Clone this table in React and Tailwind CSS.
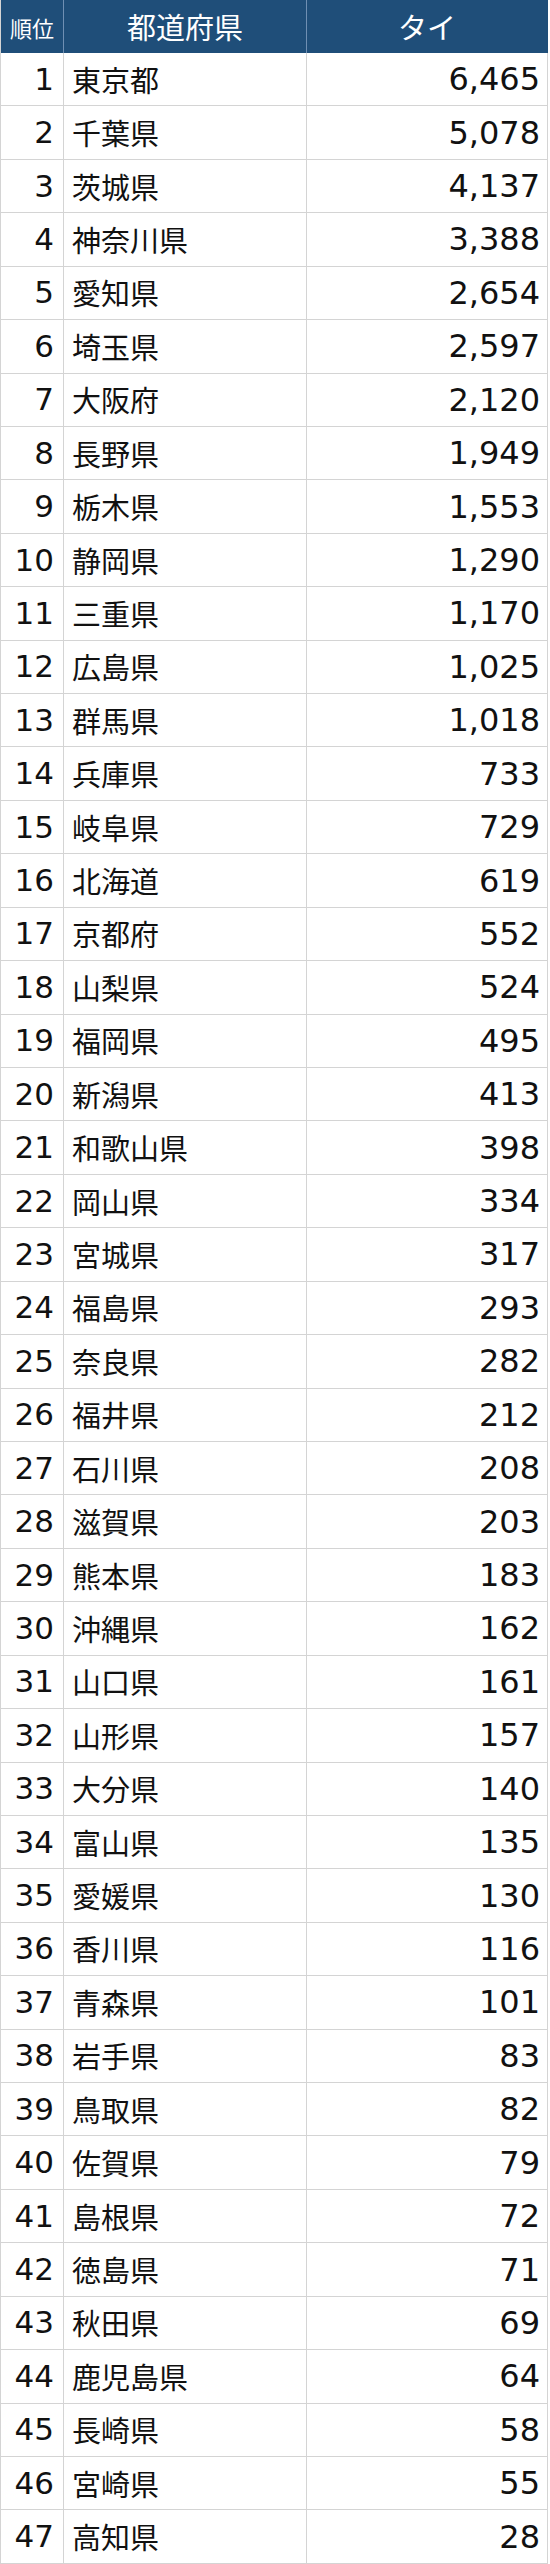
const rows = [
  ['東京都', '6,465'], ['千葉県', '5,078'], ['茨城県', '4,137'], ['神奈川県', '3,388'],
  ['愛知県', '2,654'], ['埼玉県', '2,597'], ['大阪府', '2,120'], ['長野県', '1,949'],
  ['栃木県', '1,553'], ['静岡県', '1,290'], ['三重県', '1,170'], ['広島県', '1,025'],
  ['群馬県', '1,018'], ['兵庫県', '733'], ['岐阜県', '729'], ['北海道', '619'],
  ['京都府', '552'], ['山梨県', '524'], ['福岡県', '495'], ['新潟県', '413'],
  ['和歌山県', '398'], ['岡山県', '334'], ['宮城県', '317'], ['福島県', '293'],
  ['奈良県', '282'], ['福井県', '212'], ['石川県', '208'], ['滋賀県', '203'],
  ['熊本県', '183'], ['沖縄県', '162'], ['山口県', '161'], ['山形県', '157'],
  ['大分県', '140'], ['富山県', '135'], ['愛媛県', '130'], ['香川県', '116'],
  ['青森県', '101'], ['岩手県', '83'], ['鳥取県', '82'], ['佐賀県', '79'],
  ['島根県', '72'], ['徳島県', '71'], ['秋田県', '69'], ['鹿児島県', '64'],
  ['長崎県', '58'], ['宮崎県', '55'], ['高知県', '28'],
];

const cjk = { fontFamily: "'Noto Sans CJK JP', 'Noto Sans', sans-serif" };
const num = { fontFamily: "'DejaVu Sans', 'Noto Sans CJK JP', sans-serif" };

export default function App() {
  return (
    <div className="w-[550px] bg-white" style={cjk}>
      <div className="w-[548px] border-l border-[#d4d4d4]">
        {/* header */}
        <div className="flex h-[53px] bg-[#1f4e79] text-white">
          <div className="w-[63px] flex items-center justify-center text-[22px] leading-none border-r border-[#6f8fb3]">順位</div>
          <div className="w-[243px] flex items-center justify-center text-[29px] leading-none border-r border-[#6f8fb3]">都道府県</div>
          <div className="flex-1 flex items-center justify-center text-[29px] leading-none border-r border-[#1f4e79]">タイ</div>
        </div>
        {rows.map(([name, val], i) => (
          <div key={name} className="flex h-[53.43px] border-b border-[#d4d4d4] text-[#111]">
            <div className="w-[63px] flex items-center justify-end pr-[9px] text-[31px] leading-none border-r border-[#d4d4d4]" style={num}>{i + 1}</div>
            <div className="w-[243px] flex items-center pl-[8px] text-[29px] leading-none border-r border-[#d4d4d4]">{name}</div>
            <div className="flex-1 flex items-center justify-end pr-[7px] text-[32px] leading-none border-r border-[#d4d4d4]" style={num}>{val}</div>
          </div>
        ))}
      </div>
    </div>
  );
}
